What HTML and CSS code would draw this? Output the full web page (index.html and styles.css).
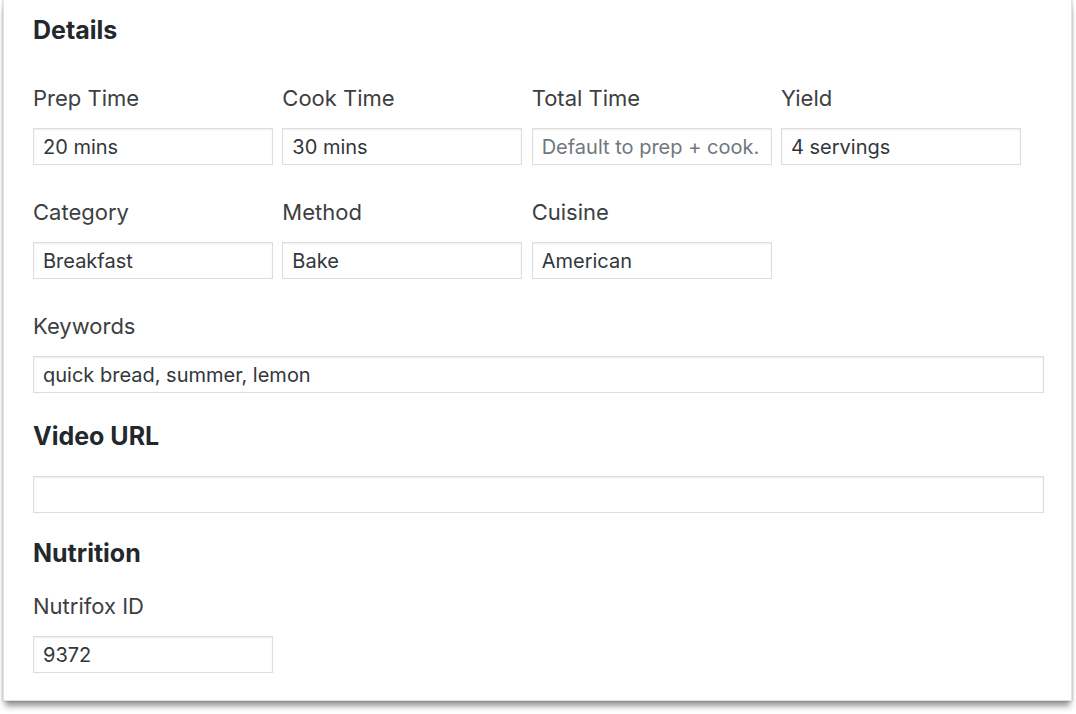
FILE: index.html
```html
<!DOCTYPE html>
<html lang="en">
<head>
    <meta charset="UTF-8">
    <meta name="viewport" content="width=device-width, initial-scale=1.0">
    <title>Recipe Details</title>
    <link rel="stylesheet" href="styles.css">
</head>
<body>
    <div class="panel">
        <h2 class="section-title">Details</h2>

        <div class="field-row">
            <div class="field">
                <label for="prep-time">Prep Time</label>
                <input id="prep-time" type="text" value="20 mins">
            </div>
            <div class="field">
                <label for="cook-time">Cook Time</label>
                <input id="cook-time" type="text" value="30 mins">
            </div>
            <div class="field">
                <label for="total-time">Total Time</label>
                <input id="total-time" type="text" placeholder="Default to prep + cook.">
            </div>
            <div class="field">
                <label for="yield">Yield</label>
                <input id="yield" type="text" value="4 servings">
            </div>
        </div>

        <div class="field-row">
            <div class="field">
                <label for="category">Category</label>
                <input id="category" type="text" value="Breakfast">
            </div>
            <div class="field">
                <label for="method">Method</label>
                <input id="method" type="text" value="Bake">
            </div>
            <div class="field">
                <label for="cuisine">Cuisine</label>
                <input id="cuisine" type="text" value="American">
            </div>
        </div>

        <div class="field-row">
            <div class="field field-wide">
                <label for="keywords">Keywords</label>
                <input id="keywords" type="text" value="quick bread, summer, lemon">
            </div>
        </div>

        <h2 class="section-title spaced">Video URL</h2>
        <input class="wide-input" type="text">

        <h2 class="section-title spaced nutrition-title">Nutrition</h2>
        <div class="field-row">
            <div class="field">
                <label for="nutrifox">Nutrifox ID</label>
                <input id="nutrifox" type="text" value="9372">
            </div>
        </div>
    </div>
</body>
</html>
```

FILE: styles.css
```css
:root {
    --heading-color: #23282d;
    --label-color: #3c4043;
    --input-text: #32373c;
    --border-color: #ddd;
}

* {
    margin: 0;
    padding: 0;
    box-sizing: border-box;
    font-family: Inter, 'Liberation Sans', sans-serif;
}

body {
    background-color: #fff;
    padding-bottom: 14px;
}

.panel {
    width: 1069px;
    margin-left: 3px;
    background-color: #fff;
    border: 1px solid #e2e2e2;
    border-top: none;
    padding: 15px 27px 27px 29px;
    box-shadow: 0 7px 6px -2px rgba(0, 0, 0, 0.42), -1px 0 2px rgba(0, 0, 0, 0.15), 1px 0 2px rgba(0, 0, 0, 0.15);
}

.section-title {
    font-size: 25px;
    line-height: 30px;
    font-weight: 700;
    color: var(--heading-color);
    margin-bottom: 39px;
}

.section-title.spaced {
    margin-top: 28px;
    margin-bottom: 25px;
}

.section-title.nutrition-title {
    margin-top: 25px;
    margin-bottom: 24px;
}

.field-row {
    display: flex;
    gap: 9.33px;
}

.field-row + .field-row {
    margin-top: 33px;
}

.field {
    width: 240px;
}

.field-wide {
    flex: 1;
}

label {
    display: block;
    font-size: 22px;
    line-height: 28px;
    color: var(--label-color);
    margin-bottom: 16px;
}

input {
    display: block;
    width: 100%;
    height: 37px;
    padding: 0 9px;
    border: 1px solid var(--border-color);
    box-shadow: inset 0 1px 2px rgba(0, 0, 0, 0.07);
    background-color: #fff;
    font-size: 20px;
    color: var(--input-text);
    outline: none;
}

input::placeholder {
    color: #72777c;
    opacity: 1;
}
```
